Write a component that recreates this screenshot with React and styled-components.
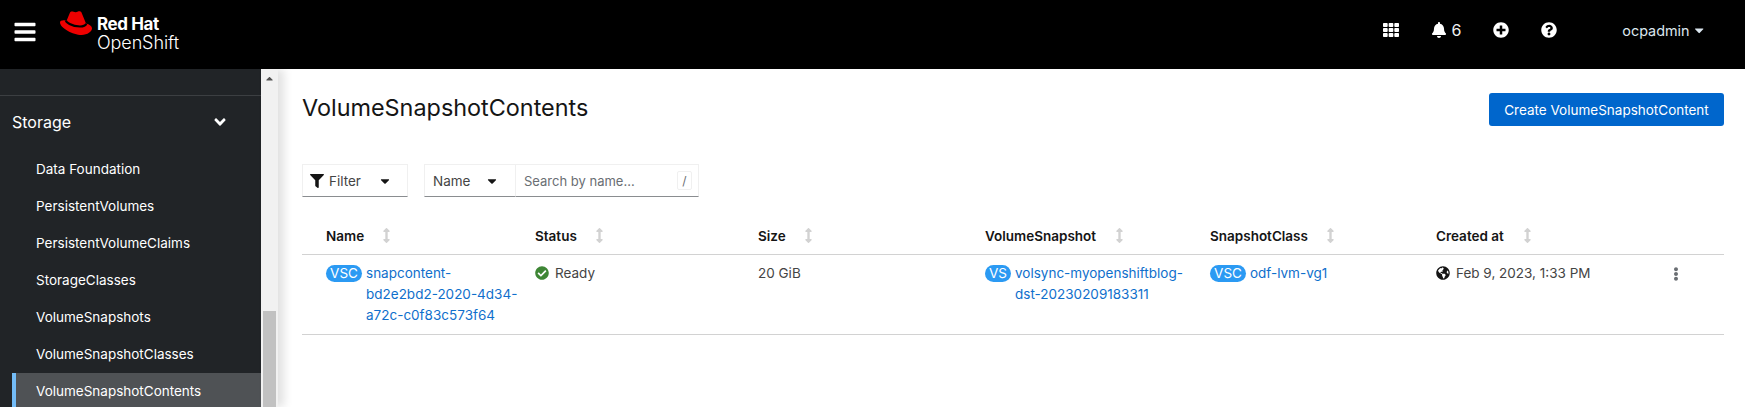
import React from 'react';
import styled, { createGlobalStyle } from 'styled-components';
import { FaBars, FaTh, FaBell, FaPlusCircle, FaQuestionCircle, FaCaretDown, FaAngleDown, FaFilter, FaCheckCircle, FaGlobeAmericas, FaEllipsisV, FaArrowsAltV, FaCaretUp } from 'react-icons/fa';

const Global = createGlobalStyle`
  html, body { margin: 0; padding: 0; height: 407px; overflow: hidden; background: #fff; }
  body { font-family: "Inter", "Noto Sans", "Liberation Sans", sans-serif; font-size: 13.5px; color: #151515; }
  * { box-sizing: border-box; }
`;

const Page = styled.div`display: flex; flex-direction: column; height: 407px; overflow: hidden;`;
const Masthead = styled.header`height: 69px; flex: none; background: #000; color: #fff; display: flex; align-items: flex-start; justify-content: space-between;`;
const BrandGroup = styled.div`display: flex; align-items: flex-start;`;
const MenuButton = styled.div`width: 22px; margin: 20px 0 0 13px; font-size: 24px; line-height: 0; svg { display: block; }`;
const Logo = styled.div`display: flex; margin: 11px 0 0 25px;`;
const LogoWords = styled.div`margin: 3px 0 0 5px; display: flex; flex-direction: column;`;
const LogoStrong = styled.span`font-weight: 700; font-size: 17px; line-height: 20px; letter-spacing: -0.4px;`;
const LogoLight = styled.span`font-weight: 300; font-size: 18px; line-height: 18px; letter-spacing: -0.1px;`;
const Tools = styled.div`display: flex; align-items: center; height: 60px; padding-right: 39px;`;
const ToolIcon = styled.span`display: inline-flex; margin-left: ${p => p.$gap}px; font-size: ${p => p.$size || 16}px;`;
const Count = styled.span`margin-left: 4px; font-size: 16px; color: #f0f0f0;`;
const User = styled.span`margin-left: 65px; color: #dbe6ef; font-size: 14.4px; display: inline-flex; align-items: center; gap: 2px;`;

const Body = styled.div`flex: 1; display: flex; min-height: 0;`;
const Sidebar = styled.nav`width: 261px; flex: none; background: #212427; color: #f0f0f0; position: relative; overflow: hidden;`;
const SideTop = styled.div`height: 27px; border-bottom: 1px solid #3c3f42;`;
const SectionRow = styled.div`height: 52px; display: flex; align-items: center; justify-content: space-between; padding: 0 32px 0 12px; font-size: 16px; color: #fff; svg { font-size: 18px; }`;
const SideList = styled.div`padding-top: 2.5px;`;
const SideItem = styled.div`
  height: 37px; display: flex; align-items: center; font-size: 13.5px;
  margin-left: 12px; padding-left: ${p => p.$active ? 20 : 24}px;
  background: ${p => p.$active ? '#4f5255' : 'transparent'};
  border-left: ${p => p.$active ? '4px solid #73bcf7' : 'none'};
  color: #fff;
`;
const Scrollbar = styled.div`width: 17px; flex: none; background: #f1f1f1; position: relative; display: flex; justify-content: center; box-shadow: 6px 0 10px rgba(3,3,3,.12); z-index: 1;`;
const ScrollUp = styled.span`color: #505050; font-size: 11px; line-height: 0; margin-top: 4px; height: 11px;`;
const Thumb = styled.div`position: absolute; left: 2px; right: 2px; top: 242px; bottom: 0; background: #c1c1c1;`;

const Main = styled.main`flex: 1; min-width: 0; padding: 24px 21px 0 24px;`;
const TitleRow = styled.div`display: flex; justify-content: space-between; align-items: flex-start; height: 33px;`;
const Title = styled.h1`margin: 0; font-weight: 400; font-size: 23.4px; line-height: 30px; color: #151515;`;
const PrimaryButton = styled.button`width: 235px; height: 33px; border: 0; border-radius: 3px; background: #06c; color: #fff; font: inherit; font-size: 13.5px; padding: 0;`;

const Toolbar = styled.div`display: flex; margin-top: 38px; height: 33px;`;
const ToolbarBox = styled.div`
  display: flex; align-items: center; height: 33px; width: ${p => p.$w}px; flex: none;
  border: 1px solid #f0f0f0; border-bottom-color: #8a8d90; font-size: 13.5px; color: #444;
  margin-left: ${p => p.$gap || 0}px; padding: 0 ${p => p.$pr || 0}px 0 ${p => p.$pl || 0}px;
  border-left-width: ${p => p.$noLeft ? 0 : 1}px;
`;
const Caret = styled.span`margin-left: auto; display: inline-flex; font-size: 14px; color: #151515;`;
const FilterIcon = styled.span`display: inline-flex; margin-right: 5px; font-size: 14px; color: #151515;`;
const Placeholder = styled.span`color: #6a6e73; font-size: 13px;`;
const SlashKey = styled.span`margin-left: auto; width: 15px; height: 19px; border: 1px solid #f0f0f0; border-radius: 2px; display: flex; align-items: center; justify-content: center; font-size: 12px; color: #6a6e73;`;

const Row = styled.div`display: grid; grid-template-columns: 209px 223px 227px 225px 226px 257px 55px; border-bottom: 1px solid #d2d2d2;`;
const HeadRow = styled(Row)`height: 58px;`;
const HeadCell = styled.div`padding: 30px 0 0 24px; font-size: 13.5px; font-weight: 600; line-height: 18px; color: #151515; display: flex; align-items: flex-start;`;
const SortIcon = styled.span`display: inline-flex; margin: 1px 0 0 ${p => p.$gap}px; font-size: 15px; color: #d2d2d2;`;
const Cell = styled.div`padding: 8px 0 8px 24px; font-size: 13.5px; line-height: 21px; color: #444; display: flex; align-items: flex-start;`;
const Badge = styled.span`flex: none; background: #2b9af3; color: #fff; border-radius: 20px; height: 17px; line-height: 17px; margin: 2px 4px 0 0; padding: 0; width: ${p => p.$w}px; text-align: center; font-size: 13.5px;`;
const ResourceLink = styled.a`color: #0f6fcc; text-decoration: none; white-space: nowrap;`;
const StatusIcon = styled.span`display: inline-flex; margin: 3px 6px 0 0; font-size: 14px; color: ${p => p.$color};`;
const Kebab = styled.div`padding: 12px 0 0 0; font-size: 14px; color: #6a6e73;`;

const Hat = () => (
  <svg width="32" height="24" viewBox="0 0 32 24">
    <path fill="#e00" d="M6.7 9.5 L9.8 2 C10.5 .5 12 .2 13.5 .8 C15 1.4 16.5 1.4 18 .6 C19.5 0 21.3 .5 21.8 2.2 L26 12.5 C29.5 13.5 32 15 32 17.3 C32 20.5 27.5 24 21.5 24 C13 24 0 17 0 11.5 C0 9.5 2.5 8.7 6.7 9.5 Z" />
    <path fill="none" stroke="#000" strokeWidth="2.2" d="M5.8 9.4 C6 11 11 15.5 20 15.5 C23 15.5 25.5 14.5 26.3 12.7" />
  </svg>
);

const nav = ['Data Foundation', 'PersistentVolumes', 'PersistentVolumeClaims', 'StorageClasses', 'VolumeSnapshots', 'VolumeSnapshotClasses', 'VolumeSnapshotContents'];
const heads = [['Name', 15], ['Status', 15], ['Size', 15], ['VolumeSnapshot', 16], ['SnapshotClass', 15], ['Created at', 16]];

export default function App() {
  return (
    <Page>
      <Global />
      <Masthead>
        <BrandGroup>
          <MenuButton><FaBars /></MenuButton>
          <Logo>
            <Hat />
            <LogoWords>
              <LogoStrong>Red Hat</LogoStrong>
              <LogoLight>OpenShift</LogoLight>
            </LogoWords>
          </Logo>
        </BrandGroup>
        <Tools>
          <ToolIcon $gap={0}><FaTh /></ToolIcon>
          <ToolIcon $gap={32}><FaBell /></ToolIcon>
          <Count>6</Count>
          <ToolIcon $gap={32}><FaPlusCircle /></ToolIcon>
          <ToolIcon $gap={32}><FaQuestionCircle /></ToolIcon>
          <User>ocpadmin <FaCaretDown /></User>
        </Tools>
      </Masthead>
      <Body>
        <Sidebar>
          <SideTop />
          <SectionRow>Storage <FaAngleDown /></SectionRow>
          <SideList>
            {nav.map((n, i) => <SideItem key={n} $active={i === nav.length - 1}>{n}</SideItem>)}
          </SideList>
        </Sidebar>
        <Scrollbar>
          <ScrollUp><FaCaretUp /></ScrollUp>
          <Thumb />
        </Scrollbar>
        <Main>
          <TitleRow>
            <Title>VolumeSnapshotContents</Title>
            <PrimaryButton>Create VolumeSnapshotContent</PrimaryButton>
          </TitleRow>
          <Toolbar>
            <ToolbarBox $w={106} $pl={7} $pr={15}>
              <FilterIcon><FaFilter /></FilterIcon>Filter<Caret><FaCaretDown /></Caret>
            </ToolbarBox>
            <ToolbarBox $w={92} $gap={16} $pl={8} $pr={16}>
              Name<Caret><FaCaretDown /></Caret>
            </ToolbarBox>
            <ToolbarBox $w={183} $pl={8} $pr={6} $noLeft>
              <Placeholder>Search by name...</Placeholder><SlashKey>/</SlashKey>
            </ToolbarBox>
          </Toolbar>
          <HeadRow>
            {heads.map(([h, g]) => <HeadCell key={h}>{h}<SortIcon $gap={g}><FaArrowsAltV /></SortIcon></HeadCell>)}
            <HeadCell />
          </HeadRow>
          <Row>
            <Cell>
              <Badge $w={36}>VSC</Badge>
              <ResourceLink>snapcontent-<br />bd2e2bd2-2020-4d34-<br />a72c-c0f83c573f64</ResourceLink>
            </Cell>
            <Cell><StatusIcon $color="#3e8635"><FaCheckCircle /></StatusIcon>Ready</Cell>
            <Cell>20 GiB</Cell>
            <Cell>
              <Badge $w={26}>VS</Badge>
              <ResourceLink>volsync-myopenshiftblog-<br />dst-20230209183311</ResourceLink>
            </Cell>
            <Cell>
              <Badge $w={36}>VSC</Badge>
              <ResourceLink>odf-lvm-vg1</ResourceLink>
            </Cell>
            <Cell><StatusIcon $color="#151515"><FaGlobeAmericas /></StatusIcon>Feb 9, 2023, 1:33 PM</Cell>
            <Kebab><FaEllipsisV /></Kebab>
          </Row>
        </Main>
      </Body>
    </Page>
  );
}
